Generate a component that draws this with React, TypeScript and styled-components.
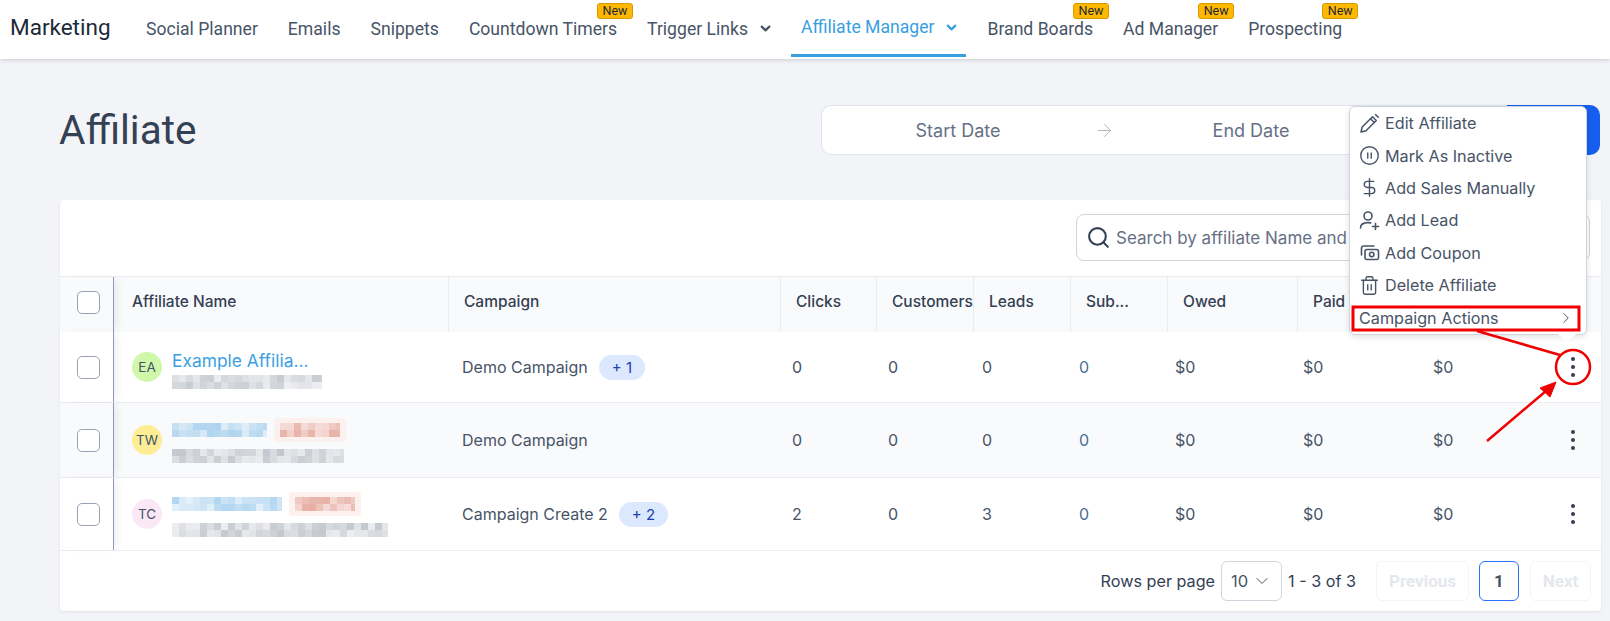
import * as React from "react";
import styled, { createGlobalStyle } from "styled-components";
import { ArrowRight, ChevronDown, ChevronRight, CirclePause, DollarSign, Search, Trash2 } from "lucide-react";

const GlobalStyle = createGlobalStyle`
  html, body {
    margin: 0;
    height: 621px;
    overflow: hidden;
    background: #f2f4f7;
    font-family: "Inter", sans-serif;
  }
  * { box-sizing: border-box; }
`;

const Page = styled.div`
  position: relative;
  width: 1610px;
  height: 621px;
  overflow: hidden;
`;

const TopBar = styled.header`
  display: flex;
  align-items: stretch;
  height: 59px;
  padding-left: 10px;
  background: #fff;
  box-shadow: 0 1px 4px rgba(16, 24, 40, 0.18);
  font-family: "Roboto", sans-serif;
`;

const Brand = styled.div`
  width: 121px;
  padding-top: 12px;
  font-size: 22.5px;
  line-height: 30px;
  font-weight: 450;
  color: #1d2939;
`;

const NavItem = styled.div<{ $active?: boolean }>`
  position: relative;
  display: flex;
  align-items: center;
  gap: 10px;
  height: 57px;
  padding: ${(p) => (p.$active ? "0 7px 0 10px" : "0 15px 0")};
  margin: ${(p) => (p.$active ? "0 6px 0 3px" : "0")};
  font-size: 17.6px;
  color: ${(p) => (p.$active ? "#37a0de" : "#475467")};
  border-bottom: ${(p) => (p.$active ? "3px solid #37a0de" : "none")};
  white-space: nowrap;
`;

const NewBadge = styled.span`
  position: absolute;
  top: 3px;
  right: -1px;
  width: 36px;
  height: 16px;
  border: 1px solid #d99a00;
  border-radius: 3px;
  background: #ffb800;
  color: #1d2939;
  font-size: 12.5px;
  font-weight: 400;
  line-height: 14px;
  text-align: center;
`;

const Main = styled.main`
  padding: 46px 9px 0 60px;
`;

const TitleRow = styled.div`
  display: flex;
  align-items: center;
  justify-content: space-between;
  height: 50px;
  padding-right: 1px;
`;

const Title = styled.h1`
  margin: 0 0 0 -1px;
  font-family: "Roboto", sans-serif;
  font-size: 40.5px;
  font-weight: 450;
  color: #344054;
`;

const DateGroup = styled.div`
  display: flex;
  width: 779px;
  height: 50px;
`;

const DatePicker = styled.div`
  flex: 1;
  display: grid;
  grid-template-columns: 272px 20px 274px 1fr;
  align-items: center;
  border: 1px solid #e0e4ea;
  border-right: none;
  border-radius: 10px 0 0 10px;
  background: #fff;
  color: #667085;
  font-size: 18px;
  text-align: center;
`;

const ExportButton = styled.button`
  width: 93px;
  border: none;
  border-radius: 0 10px 10px 0;
  background: #155eef;
`;

const Card = styled.section`
  margin-top: 45px;
  height: 411px;
  background: #fff;
  border-radius: 4px;
  box-shadow: 0 1px 3px rgba(16, 24, 40, 0.08);
`;

const Toolbar = styled.div`
  display: flex;
  justify-content: flex-end;
  height: 76px;
  padding: 14px 11px 0 0;
`;

const SearchBox = styled.div`
  display: flex;
  align-items: center;
  gap: 5px;
  width: 514px;
  height: 47px;
  padding-left: 9px;
  border: 1px solid #d0d5dd;
  border-radius: 8px;
  color: #344054;
`;

const SearchText = styled.span`
  font-size: 17px;
  color: #667085;
  white-space: nowrap;
`;

const HeadRow = styled.div`
  display: grid;
  grid-template-columns: 54px 334px 332px 96px 97px 97px 97px 130px 1fr;
  height: 56px;
  border-top: 1px solid #eaecf0;
  background: #f9fafb;
`;

const HeadCell = styled.div<{ $plain?: boolean }>`
  display: flex;
  align-items: center;
  min-width: 0;
  padding: 0 4px 7px ${(p) => (p.$plain ? "18px" : "15px")};
  border-left: ${(p) => (p.$plain ? "none" : "1px solid #eaecf0")};
  font-size: 15.5px;
  font-weight: 500;
  color: #344054;
  white-space: nowrap;
  overflow: hidden;
`;

const FrozenCell = styled.div<{ $head?: boolean }>`
  position: relative;
  z-index: 1;
  display: flex;
  align-items: center;
  padding: 0 0 ${(p) => (p.$head ? "5px" : "0")} 17px;
  background: inherit;
  border-right: 1px solid #8e9ab3;
  box-shadow: 6px 0 8px -3px rgba(16, 24, 40, 0.08);
`;

const CheckBox = styled.span`
  width: 23px;
  height: 23px;
  border: 1.5px solid #98a2b3;
  border-radius: 5px;
  background: #fff;
`;

const BodyRow = styled.div<{ $height: number; $shaded?: boolean }>`
  display: grid;
  grid-template-columns: 54px 348px 330px 96px 94px 97px 96px 128px 130px 112px 56px;
  align-items: stretch;
  height: ${(p) => p.$height}px;
  border-top: 1px solid #eaecf0;
  background: ${(p) => (p.$shaded ? "#f9fafb" : "#fff")};
  font-size: 16px;
  color: #475467;

  ${HeadRow} + & {
    border-top: none;
  }
`;

const Cell = styled.div<{ $link?: boolean }>`
  display: flex;
  align-items: center;
  color: ${(p) => (p.$link ? "#4a6f94" : "inherit")};
`;

const NameCell = styled.div`
  display: flex;
  align-items: center;
  gap: 10px;
  padding-left: 18px;
`;

const Avatar = styled.span<{ $bg: string }>`
  flex: none;
  display: flex;
  align-items: center;
  justify-content: center;
  width: 30px;
  height: 30px;
  border-radius: 50%;
  background: ${(p) => p.$bg};
  color: #475467;
  font-size: 13.5px;
`;

const NameStack = styled.div<{ $loose?: boolean }>`
  display: flex;
  flex-direction: column;
  gap: ${(p) => (p.$loose ? "7px" : "3px")};
`;

const NameLine = styled.div`
  display: flex;
  align-items: center;
  gap: 5px;
`;

const NameLink = styled.span`
  margin-top: 4px;
  font-size: 17.4px;
  line-height: 22px;
  color: #3b9fe2;
`;

const Pill = styled.span`
  display: inline-flex;
  align-items: center;
  justify-content: center;
  height: 25px;
  margin-left: 11px;
  padding: 0 13px;
  border-radius: 13px;
  background: #dbe8fe;
  color: #1e40af;
  font-size: 15px;
`;

const DotsCell = styled.div`
  display: flex;
  align-items: center;
  justify-content: center;
  color: #344054;
`;

const Footer = styled.div`
  display: flex;
  align-items: center;
  height: 61px;
  padding-right: 10px;
  justify-content: flex-end;
  border-top: 1px solid #eaecf0;
  font-size: 16.2px;
  color: #344054;
`;

const RowsSelect = styled.div`
  display: flex;
  align-items: center;
  gap: 4px;
  width: 61px;
  height: 40px;
  margin: 0 6px;
  padding-left: 9px;
  border: 1px solid #d0d5dd;
  border-radius: 6px;
  font-size: 16.5px;
  color: #475467;
`;

const PageButton = styled.div<{ $current?: boolean; $w: number; $gap: number }>`
  display: flex;
  align-items: center;
  justify-content: center;
  width: ${(p) => p.$w}px;
  height: 40px;
  margin-left: ${(p) => p.$gap}px;
  border: 1px solid ${(p) => (p.$current ? "#2970ff" : "#f2f4f7")};
  border-radius: 6px;
  font-family: "Roboto", sans-serif;
  font-size: 17px;
  font-weight: 700;
  color: ${(p) => (p.$current ? "#475467" : "#e4e7ec")};
`;

const Menu = styled.div`
  position: absolute;
  z-index: 3;
  left: 1349px;
  top: 106px;
  width: 238px;
  height: 229px;
  padding: 0 8px 0 9px;
  border: 1px solid #d0d5dd;
  border-radius: 6px;
  background: #fff;
  box-shadow: 0 2px 6px rgba(16, 24, 40, 0.12);

  &::after {
    content: "";
    position: absolute;
    left: 208px;
    bottom: -8px;
    width: 0;
    height: 0;
    border-left: 9px solid transparent;
    border-right: 9px solid transparent;
    border-top: 8px solid #fff;
  }
`;

const MenuItem = styled.div`
  display: flex;
  align-items: center;
  gap: 5px;
  height: 32.4px;
  font-size: 16.2px;
  color: #475467;
  white-space: nowrap;

  & > svg {
    flex: none;
  }
`;

const MenuSubmenu = styled(MenuItem)`
  justify-content: space-between;
  padding-right: 3px;
`;

const Annotations = styled.svg`
  position: absolute;
  z-index: 4;
  left: 0;
  top: 0;
  pointer-events: none;
`;

const Dots = () => (
  <svg width="8" height="22" viewBox="0 0 8 22" fill="currentColor">
    <circle cx="4" cy="3" r="2" />
    <circle cx="4" cy="11" r="2" />
    <circle cx="4" cy="19" r="2" />
  </svg>
);

const PencilIcon = () => (
  <svg width="21" height="21" viewBox="0 0 21 21" fill="none" stroke="#475467" strokeWidth="1.5" strokeLinejoin="round" strokeLinecap="round">
    <path d="M2 19l1.2-5L13.5 3.7l3.8 3.8L7 17.8z" />
    <path d="M16.5 1.5l2.8 2.8" />
    <path d="M11.5 5.7l3.8 3.8" />
  </svg>
);

const UserPlusIcon = () => (
  <svg width="21" height="21" viewBox="0 0 21 21" fill="none" stroke="#475467" strokeWidth="1.6" strokeLinecap="round">
    <circle cx="9" cy="6" r="4" />
    <path d="M1.5 18c0-3.6 3-5.4 7.5-5.4 1 0 1.9.1 2.7.3" />
    <path d="M16.5 13.5v6M13.5 16.5h6" />
  </svg>
);

const CouponIcon = () => (
  <svg width="21" height="21" viewBox="0 0 21 21" fill="none" stroke="#475467" strokeWidth="1.6" strokeLinejoin="round">
    <path d="M2.5 13V6.2C2.5 5 3.5 4 4.7 4H15" strokeLinecap="round" />
    <rect x="6" y="7.5" width="13.5" height="10" rx="2" />
    <circle cx="12.7" cy="12.5" r="2.2" />
  </svg>
);

// pixelated censor patch from the screenshot
const Mosaic = ({ w, color, rows = 2, seed = 1 }: { w: number; color: string; rows?: number; seed?: number }) => {
  const cell = 7;
  const cols = Math.ceil(w / cell);
  const cells: React.ReactNode[] = [];
  for (let y = 0; y < rows; y++) {
    for (let x = 0; x < cols; x++) {
      const n = Math.abs(Math.sin((x + 1) * 12.9898 + (y + 1) * 78.233 + seed) * 43758.5453) % 1;
      cells.push(<rect key={x + "-" + y} x={x * cell} y={y * cell} width={cell} height={cell} fill={color} opacity={0.2 + n * 0.5} />);
    }
  }
  return (
    <svg width={w} height={rows * cell} style={{ display: "block", flex: "none" }}>
      {cells}
    </svg>
  );
};

const RedPatch = styled.span`
  display: flex;
  padding: 5px 6px;
  margin-left: 2px;
  background: #fdf1ef;
  border-radius: 4px;
`;

const rows = [
  { h: 70, initials: "EA", bg: "#d0f8ab", campaign: "Demo Campaign", extra: "+ 1", v: ["0", "0", "0", "0"] },
  { h: 75, initials: "TW", bg: "#fdee96", campaign: "Demo Campaign", extra: "", v: ["0", "0", "0", "0"], shaded: true, blur: [95, 60, 172] },
  { h: 73, initials: "TC", bg: "#fbe8f6", campaign: "Campaign Create 2", extra: "+ 2", v: ["2", "0", "3", "0"], blur: [110, 60, 216] }
];

const navItems = [
  { label: "Social Planner" },
  { label: "Emails" },
  { label: "Snippets" },
  { label: "Countdown Timers", isNew: true },
  { label: "Trigger Links", chevron: true }
];

export default function App() {
  return (
    <Page>
      <GlobalStyle />
      <TopBar>
        <Brand>Marketing</Brand>
        {navItems.map((n) => (
          <NavItem key={n.label}>
            {n.label}
            {n.chevron && <ChevronDown size={15} strokeWidth={3.5} />}
            {n.isNew && <NewBadge>New</NewBadge>}
          </NavItem>
        ))}
        <NavItem $active>
          Affiliate Manager
          <ChevronDown size={15} strokeWidth={3.5} />
        </NavItem>
        {["Brand Boards", "Ad Manager", "Prospecting"].map((l) => (
          <NavItem key={l}>
            {l}
            <NewBadge>New</NewBadge>
          </NavItem>
        ))}
      </TopBar>

      <Main>
        <TitleRow>
          <Title>Affiliate</Title>
          <DateGroup>
            <DatePicker>
              <span>Start Date</span>
              <ArrowRight size={21} strokeWidth={1.1} color="#b0b5bd" />
              <span>End Date</span>
            </DatePicker>
            <ExportButton aria-label="Export" />
          </DateGroup>
        </TitleRow>

        <Card>
          <Toolbar>
            <SearchBox>
              <Search size={25} />
              <SearchText>Search by affiliate Name and Email</SearchText>
            </SearchBox>
          </Toolbar>

          <HeadRow>
            <FrozenCell $head>
              <CheckBox />
            </FrozenCell>
            <HeadCell $plain>Affiliate Name</HeadCell>
            <HeadCell>Campaign</HeadCell>
            <HeadCell>Clicks</HeadCell>
            <HeadCell>Customers</HeadCell>
            <HeadCell>Leads</HeadCell>
            <HeadCell>Sub...</HeadCell>
            <HeadCell>Owed</HeadCell>
            <HeadCell>Paid</HeadCell>
          </HeadRow>

          {rows.map((r, i) => (
            <BodyRow key={r.initials} $height={r.h} $shaded={r.shaded}>
              <FrozenCell>
                <CheckBox />
              </FrozenCell>
              <NameCell>
                <Avatar $bg={r.bg}>{r.initials}</Avatar>
                <NameStack $loose={!!r.blur}>
                  {r.blur ? (
                    <NameLine>
                      <Mosaic w={r.blur[0]} color="#8fc3ea" seed={i + 3} />
                      <RedPatch>
                        <Mosaic w={r.blur[1]} color="#dc8f80" seed={i + 7} />
                      </RedPatch>
                    </NameLine>
                  ) : (
                    <NameLink>Example Affilia...</NameLink>
                  )}
                  <Mosaic w={r.blur ? r.blur[2] : 150} color="#aab0ba" seed={i + 11} />
                </NameStack>
              </NameCell>
              <Cell>
                {r.campaign}
                {r.extra && <Pill>{r.extra}</Pill>}
              </Cell>
              <Cell>{r.v[0]}</Cell>
              <Cell>{r.v[1]}</Cell>
              <Cell>{r.v[2]}</Cell>
              <Cell $link>{r.v[3]}</Cell>
              <Cell>$0</Cell>
              <Cell>$0</Cell>
              <Cell>$0</Cell>
              <DotsCell>
                <Dots />
              </DotsCell>
            </BodyRow>
          ))}

          <Footer>
            <span>Rows per page</span>
            <RowsSelect>
              10
              <ChevronDown size={20} strokeWidth={1.2} />
            </RowsSelect>
            <span>1 - 3 of 3</span>
            <PageButton $w={93} $gap={20}>Previous</PageButton>
            <PageButton $w={40} $gap={10} $current>1</PageButton>
            <PageButton $w={61} $gap={11}>Next</PageButton>
          </Footer>
        </Card>
      </Main>

      <Menu>
        <MenuItem>
          <PencilIcon />
          Edit Affiliate
        </MenuItem>
        <MenuItem>
          <CirclePause size={21} strokeWidth={1.6} />
          Mark As Inactive
        </MenuItem>
        <MenuItem>
          <DollarSign size={21} strokeWidth={1.6} />
          Add Sales Manually
        </MenuItem>
        <MenuItem>
          <UserPlusIcon />
          Add Lead
        </MenuItem>
        <MenuItem>
          <CouponIcon />
          Add Coupon
        </MenuItem>
        <MenuItem>
          <Trash2 size={21} strokeWidth={1.6} />
          Delete Affiliate
        </MenuItem>
        <MenuSubmenu>
          Campaign Actions
          <ChevronRight size={18} strokeWidth={1.3} />
        </MenuSubmenu>
      </Menu>

      <Annotations width="1610" height="621" viewBox="0 0 1610 621" fill="none">
        <rect x="1353" y="307" width="226" height="23" stroke="#f00000" strokeWidth="3" />
        <path d="M1477 331L1560 355" stroke="#f00000" strokeWidth="2.5" />
        <circle cx="1573" cy="367" r="17" stroke="#f00000" strokeWidth="2.5" />
        <path d="M1487 441L1546 391" stroke="#f00000" strokeWidth="2.5" />
        <path d="M1556 382L1540 388L1550 397Z" fill="#f00000" stroke="#f00000" />
      </Annotations>
    </Page>
  );
}
